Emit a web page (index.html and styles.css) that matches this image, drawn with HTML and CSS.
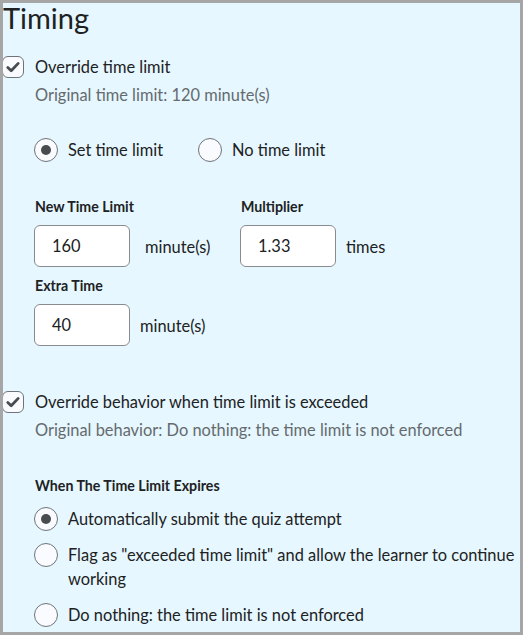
FILE: index.html
```html
<!DOCTYPE html>
<html lang="en">
<head>
  <meta charset="UTF-8">
  <title>Timing</title>
  <link rel="stylesheet" href="styles.css">
</head>
<body>
  <div class="frame">
    <h2 class="title">Timing</h2>

    <label class="check-row">
      <span class="checkbox">
        <svg viewBox="0 0 22 22" width="22" height="22"><path d="M5.8 11.4l3.4 3.4L16.2 7.4" fill="none" stroke="#494c4e" stroke-width="2.8" stroke-linecap="round" stroke-linejoin="round"/></svg>
      </span>
      <span>Override time limit</span>
    </label>
    <p class="note">Original time limit: 120 minute(s)</p>

    <div class="radio-inline">
      <label class="radio-row"><span class="radio on"></span><span>Set time limit</span></label>
      <label class="radio-row"><span class="radio"></span><span>No time limit</span></label>
    </div>

    <div class="fields">
      <div class="field first">
        <div class="field-label">New Time Limit</div>
        <div class="field-input">
          <span class="input">160</span>
          <span class="unit wide">minute(s)</span>
        </div>
      </div>
      <div class="field">
        <div class="field-label">Multiplier</div>
        <div class="field-input">
          <span class="input">1.33</span>
          <span class="unit">times</span>
        </div>
      </div>
    </div>
    <div class="fields extra">
      <div class="field">
        <div class="field-label">Extra Time</div>
        <div class="field-input">
          <span class="input">40</span>
          <span class="unit">minute(s)</span>
        </div>
      </div>
    </div>

    <label class="check-row second">
      <span class="checkbox">
        <svg viewBox="0 0 22 22" width="22" height="22"><path d="M5.8 11.4l3.4 3.4L16.2 7.4" fill="none" stroke="#494c4e" stroke-width="2.8" stroke-linecap="round" stroke-linejoin="round"/></svg>
      </span>
      <span>Override behavior when time limit is exceeded</span>
    </label>
    <p class="note">Original behavior: Do nothing: the time limit is not enforced</p>

    <div class="group-label">When The Time Limit Expires</div>
    <div class="radio-list">
      <label class="radio-row"><span class="radio on"></span><span>Automatically submit the quiz attempt</span></label>
      <label class="radio-row"><span class="radio"></span><span>Flag as "exceeded time limit" and allow the learner to continue working</span></label>
      <label class="radio-row"><span class="radio"></span><span>Do nothing: the time limit is not enforced</span></label>
    </div>
  </div>
</body>
</html>
```

FILE: styles.css
```css
* {
  margin: 0;
  padding: 0;
  box-sizing: border-box;
}

body {
  font-family: Lato, "Liberation Sans", sans-serif;
  color: #202122;
  background-color: #a6a6a6;
}

.frame {
  width: 523px;
  height: 635px;
  border: 3px solid #a6a6a6;
  background-color: #e6f7ff;
  overflow: hidden;
}

.title {
  font-size: 29px;
  font-weight: 400;
  line-height: 36px;
  margin-top: -3px;
}

.check-row {
  display: flex;
  align-items: center;
  margin: 19px 0 0 -1px;
  font-size: 16.4px;
  line-height: 24px;
}

.check-row.second {
  margin-top: 44px;
}

.checkbox {
  width: 22px;
  height: 22px;
  border: 1px solid #6e7477;
  border-radius: 6px;
  background-color: #f9fbff;
  margin-right: 11px;
  display: flex;
}

.checkbox svg {
  margin: -1px;
}

.note {
  margin: 4px 0 0 32px;
  font-size: 16.4px;
  line-height: 24px;
  color: #656a6d;
}

.radio-inline {
  display: flex;
  margin: 31px 0 0 31px;
}

.radio-inline .radio-row {
  margin-right: 35px;
}

.radio-row {
  display: flex;
  align-items: center;
  font-size: 16.4px;
  line-height: 24px;
}

.radio {
  flex: none;
  width: 24px;
  height: 24px;
  border: 1px solid #6e7477;
  border-radius: 50%;
  background-color: #f9fbff;
  margin-right: 10px;
  display: flex;
  align-items: center;
  justify-content: center;
}

.radio.on::after {
  content: '';
  width: 10px;
  height: 10px;
  border-radius: 50%;
  background-color: #494c4e;
}

.fields {
  display: flex;
  margin: 35px 0 0 31px;
}

.fields.extra {
  margin-top: 9px;
}

.field.first {
  width: 206px;
}

.field-label {
  font-size: 14.2px;
  font-weight: 700;
  line-height: 20px;
  margin: 0 0 8px 1px;
}

.field-input {
  display: flex;
  align-items: center;
}

.input {
  width: 96px;
  height: 42px;
  border: 1px solid #888c8f;
  border-radius: 6px;
  background-color: #fff;
  padding-left: 17px;
  font-size: 16.4px;
  line-height: 40px;
}

.unit {
  margin-left: 10px;
  font-size: 16.4px;
}

.unit.wide {
  margin-left: 15px;
}

.group-label {
  margin: 34px 0 0 32px;
  font-size: 14.2px;
  font-weight: 700;
  line-height: 20px;
}

.radio-list {
  margin: 11px 0 0 31px;
  display: flex;
  flex-direction: column;
  gap: 12px;
}

.radio-list .radio-row {
  align-items: flex-start;
}
```
